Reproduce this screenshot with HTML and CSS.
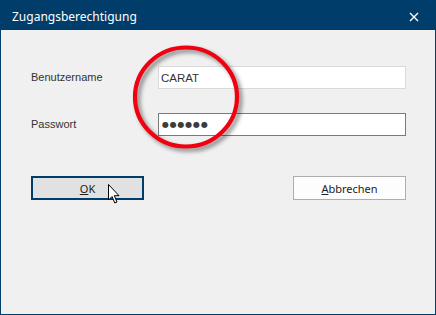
FILE: index.html
```html
<!DOCTYPE html>
<html lang="de">
<head>
    <meta charset="UTF-8">
    <title>Zugangsberechtigung</title>
    <link rel="stylesheet" href="styles.css">
</head>
<body>
    <div class="window">
        <div class="titlebar">
            <span class="title">Zugangsberechtigung</span>
            <svg class="close" width="10" height="10" viewBox="0 0 10 10">
                <path d="M1 1 L9 9 M9 1 L1 9" stroke="#fff" stroke-width="1.4" fill="none"/>
            </svg>
        </div>

        <div class="content">
            <div class="form">
                <label>Benutzername</label>
                <div class="field field-user">CARAT</div>

                <label>Passwort</label>
                <div class="field field-pass"><span class="dots">●●●●●●</span></div>
            </div>

            <div class="buttons">
                <div class="btn btn-default"><u>O</u>K</div>
                <div class="btn"><u>A</u>bbrechen</div>
            </div>
        </div>

        <!-- highlight ring drawn over the fields -->
        <svg class="ring" width="120" height="116" viewBox="0 0 120 116">
            <ellipse cx="55" cy="53" rx="51" ry="49.5" fill="none" stroke="#f00010" stroke-width="4.2"/>
        </svg>

        <!-- mouse pointer -->
        <svg class="pointer" width="14" height="21" viewBox="0 0 14 21">
            <path d="M0.5 0.5 L0.5 16 L4 12.5 L6.8 19 L9 18 L6.3 11.7 L11 11.7 Z" fill="#fff" stroke="#000" stroke-width="1" stroke-linejoin="round"/>
        </svg>
    </div>
</body>
</html>
```

FILE: styles.css
```css
* {
    margin: 0;
    padding: 0;
    box-sizing: border-box;
}

body {
    background: #f0f0f0;
    font-family: 'Liberation Sans', Arial, sans-serif;
}

.window {
    position: relative;
    width: 436px;
    height: 315px;
    border: 1px solid #003d6b;
    background: #f0f0f0;
    overflow: hidden;
}

.titlebar {
    height: 29px;
    background: #003d6b;
    display: flex;
    align-items: center;
    justify-content: space-between;
    padding: 0 12px 0 11px;
    color: #fff;
}

.title {
    font-family: 'Noto Sans', 'Open Sans', sans-serif;
    font-size: 12px;
    padding-top: 1px;
}

.close {
    margin-top: 2px;
    margin-right: 4px;
}

.content {
    padding: 36px 29px 0 30px;
}

.form {
    display: grid;
    grid-template-columns: 127px 248px;
    row-gap: 24px;
    align-items: center;
}

.form label {
    font-size: 11px;
    color: #333;
    margin-top: -2px;
}

.field {
    height: 23px;
    background: #fff;
    display: flex;
    align-items: center;
    padding-left: 2px;
    font-size: 11.5px;
    color: #333;
}

.field-user {
    border: 1px solid #d9d9d9;
}

.field-pass {
    border: 1px solid #7a7a7a;
}

.dots {
    font-family: 'DejaVu Sans', sans-serif;
    font-size: 8px;
    letter-spacing: 0.8px;
    color: #3c3c3c;
    padding-left: 1px;
}

.buttons {
    display: flex;
    justify-content: space-between;
    width: 375px;
    margin-top: 40px;
}

.btn {
    width: 113px;
    height: 24px;
    border: 1px solid #adadad;
    background: #fdfdfd;
    display: flex;
    align-items: center;
    justify-content: center;
    font-family: 'Noto Sans', 'Open Sans', sans-serif;
    font-size: 11px;
    color: #222;
}

.btn-default {
    border: 2px solid #003d6b;
    background: #e1e1e1;
}

.ring {
    position: absolute;
    left: 130px;
    top: 43px;
    filter: drop-shadow(3px 3px 2px rgba(0, 0, 0, 0.45));
}

.pointer {
    position: absolute;
    left: 107px;
    top: 183px;
}
```
